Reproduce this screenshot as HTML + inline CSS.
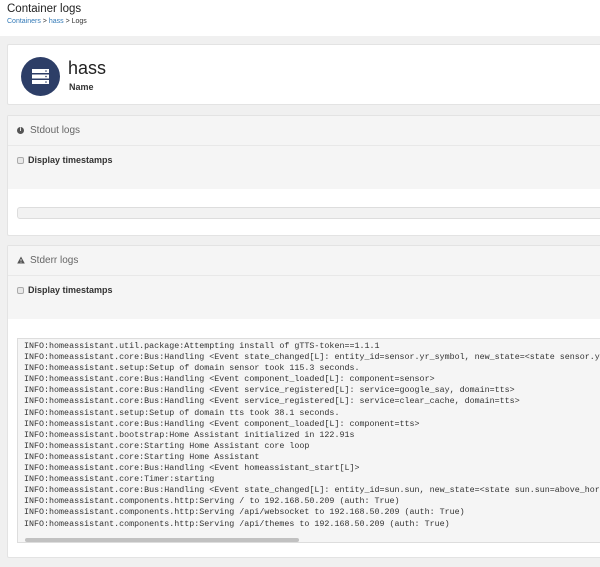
<!DOCTYPE html>
<html><head><meta charset="utf-8"><style>
*{margin:0;padding:0;box-sizing:border-box}
body{width:600px;height:567px;overflow:hidden;background:#f0f0f0;font-family:"Liberation Sans",sans-serif;color:#333;position:relative}
.top{position:absolute;left:0;top:0;width:600px;height:36px;background:#fff}
.top h1{position:absolute;left:7px;top:3px;font-size:11.5px;font-weight:normal;color:#222}
.top .bc{position:absolute;left:7px;top:18px;font-size:7px;color:#333}
.top .bc a{color:#337ab7;text-decoration:none}
.card{position:absolute;left:7px;right:-4px;background:#fff;border:1px solid #e3e3e3;border-radius:2px}
.c1{top:44px;height:61px}
.circle{position:absolute;left:13px;top:12px;width:39px;height:39px;border-radius:50%;background:#2d3e67}
.c1 .name{position:absolute;left:60px;top:13px;font-size:18px;color:#222}
.c1 .lbl{position:absolute;left:61px;top:37px;font-size:9px;font-weight:bold;color:#333}
.ph{position:absolute;left:0;right:0;height:30px;background:#f5f5f5;border-bottom:1px solid #e8e8e8;font-size:10px;color:#666;padding:9px 0 0 22px}
.cb{position:absolute;left:0;right:0;background:#f5f5f5;font-size:9px;font-weight:bold;color:#333;padding:9px 0 0 20px}
.cb i{position:absolute;left:9px;top:11px;width:7px;height:7px;border:1px solid #aaa;border-radius:2px;background:#e8e8e8}
.bar{position:absolute;left:9px;right:0;height:12px;background:#f2f2f2;border:1px solid #ddd;border-radius:3px}
pre{position:absolute;left:9px;right:0;top:92px;height:205px;background:#f5f5f5;border:1px solid #ddd;font-family:"Liberation Mono",monospace;font-size:8.35px;line-height:11.1px;color:#333;padding:2px 0 0 6px;overflow:hidden;white-space:pre}
.sb{position:absolute;left:7px;top:199px;width:274px;height:4px;background:#c1c1c1;border-radius:2px}
</style></head><body>
<div class="top"><h1>Container logs</h1><div class="bc"><a>Containers</a> &gt; <a>hass</a> &gt; Logs</div></div>
<div class="card c1"><div class="circle">
<svg width="39" height="39" viewBox="0 0 39 39"><g fill="#fff"><rect x="11" y="12" width="17" height="4"/><rect x="11" y="17.5" width="17" height="4"/><rect x="11" y="23" width="17" height="4"/></g><g fill="#2d3e67"><circle cx="25" cy="14" r=".8"/><circle cx="25" cy="19.5" r=".8"/><circle cx="25" cy="25" r=".8"/></g></svg>
</div><div class="name">hass</div><div class="lbl">Name</div></div>
<div class="card" style="top:115px;height:121px">
<div class="ph" style="top:0"><span style="position:absolute;left:9px;top:11px;width:7px;height:7px;border-radius:50%;background:#555;color:#fff;font-size:6px;line-height:7px;text-align:center;font-weight:bold">i</span>Stdout logs</div>
<div class="cb" style="top:30px;height:43px"><i></i>Display timestamps</div>
<div class="bar" style="top:91px"></div>
</div>
<div class="card" style="top:245px;height:313px">
<div class="ph" style="top:0"><svg style="position:absolute;left:9px;top:10px" width="8" height="8" viewBox="0 0 8 8"><path d="M4 0.5L7.8 7.5H0.2Z" fill="#555"/><rect x="3.6" y="3" width=".8" height="2.3" fill="#f5f5f5"/><rect x="3.6" y="5.9" width=".8" height=".8" fill="#f5f5f5"/></svg>Stderr logs</div>
<div class="cb" style="top:30px;height:43px"><i></i>Display timestamps</div>
<pre>INFO:homeassistant.util.package:Attempting install of gTTS-token==1.1.1
INFO:homeassistant.core:Bus:Handling &lt;Event state_changed[L]: entity_id=sensor.yr_symbol, new_state=&lt;state sensor.yr_symbol
INFO:homeassistant.setup:Setup of domain sensor took 115.3 seconds.
INFO:homeassistant.core:Bus:Handling &lt;Event component_loaded[L]: component=sensor&gt;
INFO:homeassistant.core:Bus:Handling &lt;Event service_registered[L]: service=google_say, domain=tts&gt;
INFO:homeassistant.core:Bus:Handling &lt;Event service_registered[L]: service=clear_cache, domain=tts&gt;
INFO:homeassistant.setup:Setup of domain tts took 38.1 seconds.
INFO:homeassistant.core:Bus:Handling &lt;Event component_loaded[L]: component=tts&gt;
INFO:homeassistant.bootstrap:Home Assistant initialized in 122.91s
INFO:homeassistant.core:Starting Home Assistant core loop
INFO:homeassistant.core:Starting Home Assistant
INFO:homeassistant.core:Bus:Handling &lt;Event homeassistant_start[L]&gt;
INFO:homeassistant.core:Timer:starting
INFO:homeassistant.core:Bus:Handling &lt;Event state_changed[L]: entity_id=sun.sun, new_state=&lt;state sun.sun=above_horizon
INFO:homeassistant.components.http:Serving / to 192.168.50.209 (auth: True)
INFO:homeassistant.components.http:Serving /api/websocket to 192.168.50.209 (auth: True)
INFO:homeassistant.components.http:Serving /api/themes to 192.168.50.209 (auth: True)<div class="sb"></div></pre>
</div>
</body></html>
